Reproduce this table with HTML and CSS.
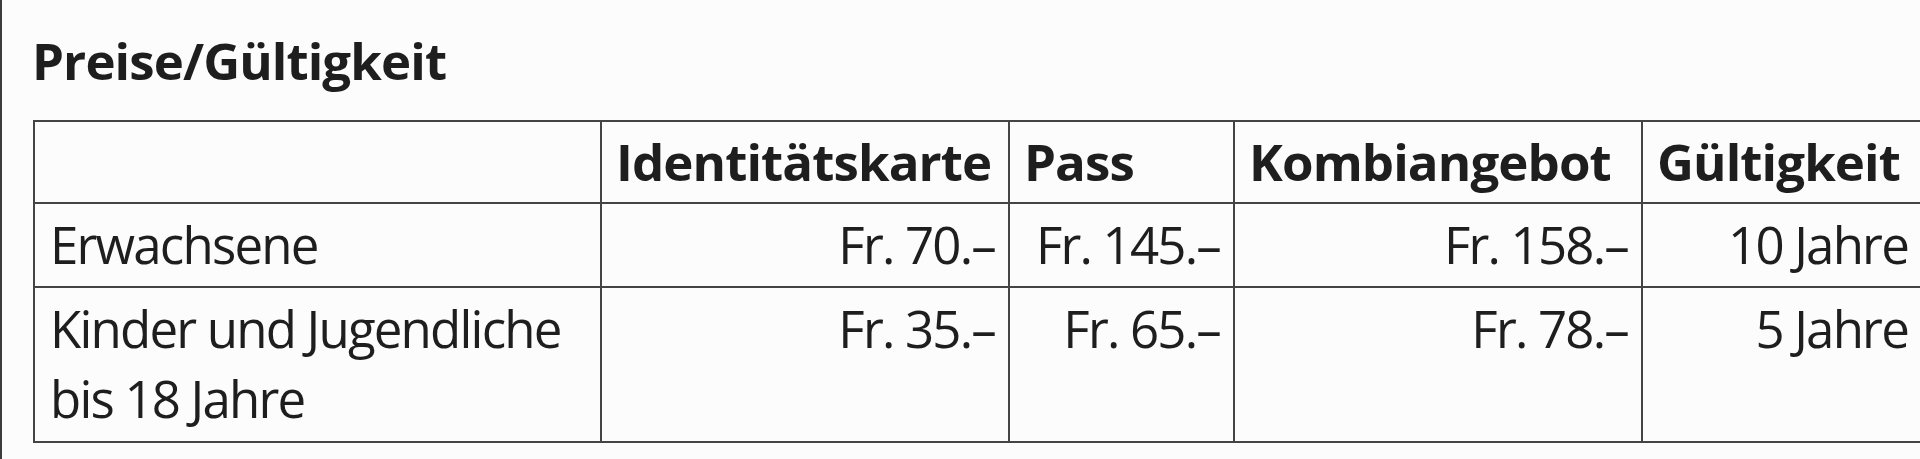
FILE: index.html
```html
<!DOCTYPE html>
<html lang="de">
<head>
<meta charset="utf-8">
<title>Preise/Gültigkeit</title>
<link rel="stylesheet" href="styles.css">
</head>
<body>
<div class="frame">
  <h2 class="title">Preise/Gültigkeit</h2>
  <div class="prices" role="table">
    <div class="cell head" role="columnheader"></div>
    <div class="cell head" role="columnheader">Identitätskarte</div>
    <div class="cell head" role="columnheader">Pass</div>
    <div class="cell head" role="columnheader">Kombiangebot</div>
    <div class="cell head" role="columnheader">Gültigkeit</div>

    <div class="cell label" role="rowheader">Erwachsene</div>
    <div class="cell num" role="cell">Fr. 70.–</div>
    <div class="cell num" role="cell">Fr. 145.–</div>
    <div class="cell num" role="cell">Fr. 158.–</div>
    <div class="cell num" role="cell">10 Jahre</div>

    <div class="cell label" role="rowheader">Kinder und Jugendliche<br>bis 18 Jahre</div>
    <div class="cell num" role="cell">Fr. 35.–</div>
    <div class="cell num" role="cell">Fr. 65.–</div>
    <div class="cell num" role="cell">Fr. 78.–</div>
    <div class="cell num" role="cell">5 Jahre</div>
  </div>
</div>
</body>
</html>
```
FILE: styles.css
```css
html, body {
  margin: 0;
  padding: 0;
  overflow: hidden;
  background: #fcfcfc;
}

.frame {
  min-height: 459px;
  border-left: 2px solid #3c3c3c;
  box-sizing: border-box;
  font-family: "Open Sans", "Noto Sans", sans-serif;
  font-size: 51px;
  line-height: 70px;
  color: #1e1e1e;
}

.title {
  margin: 0 0 25px 0;
  padding: 25px 0 0 30px;
  font-size: 51px;
  line-height: 70px;
  font-weight: 700;
  letter-spacing: -0.9px;
  white-space: nowrap;
}

.prices {
  display: grid;
  grid-template-columns: 567px 408px 225px 408px 280px;
  grid-template-rows: 82px 84px 155px;
  margin-left: 31px;
  width: max-content;
  border-left: 2px solid #444;
  border-top: 2px solid #444;
}

.cell {
  box-sizing: border-box;
  border-right: 2px solid #444;
  border-bottom: 2px solid #444;
  padding: 5px 13px 0 14px;
  white-space: nowrap;
  letter-spacing: -1.8px;
}

.head {
  padding-top: 4px;
  font-weight: 700;
  letter-spacing: -0.9px;
}

.label {
  padding-left: 15px;
}

.num {
  text-align: right;
}
```
